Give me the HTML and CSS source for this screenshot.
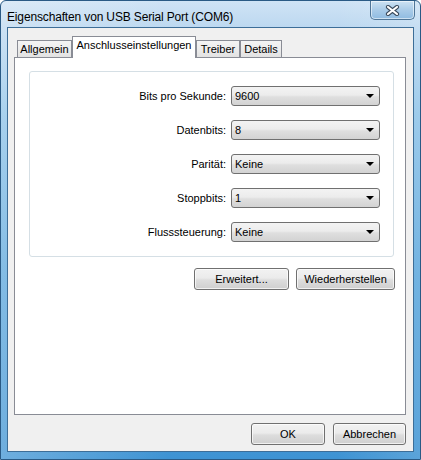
FILE: index.html
```html
<!DOCTYPE html>
<html>
<head>
<meta charset="utf-8">
<link rel="stylesheet" href="styles.css">
</head>
<body>
<div class="window">
  <div class="titlebar">
    <span class="title">Eigenschaften von USB Serial Port (COM6)</span>
    <div class="close">
      <svg width="15" height="11" viewBox="0 0 15 11">
        <path d="M3 2 L12 9 M12 2 L3 9" stroke="#3a4a5c" stroke-width="4.2" stroke-linecap="round" fill="none"/>
        <path d="M3 2 L12 9 M12 2 L3 9" stroke="#ffffff" stroke-width="2.2" stroke-linecap="round" fill="none"/>
      </svg>
    </div>
  </div>
  <div class="client">
    <div class="tabs">
      <div class="tab t1">Allgemein</div>
      <div class="tab active">Anschlusseinstellungen</div>
      <div class="tab t3">Treiber</div>
      <div class="tab t4">Details</div>
    </div>
    <div class="panel">
      <div class="group">
        <label class="lbl">Bits pro Sekunde:</label>
        <div class="combo"><span>9600</span><i class="arrow"></i></div>
        <label class="lbl">Datenbits:</label>
        <div class="combo"><span>8</span><i class="arrow"></i></div>
        <label class="lbl">Parität:</label>
        <div class="combo"><span>Keine</span><i class="arrow"></i></div>
        <label class="lbl">Stoppbits:</label>
        <div class="combo"><span>1</span><i class="arrow"></i></div>
        <label class="lbl">Flusssteuerung:</label>
        <div class="combo"><span>Keine</span><i class="arrow"></i></div>
      </div>
      <div class="actions">
        <button class="btn b-adv">Erweitert...</button>
        <button class="btn b-reset">Wiederherstellen</button>
      </div>
    </div>
    <div class="footer">
      <button class="btn b-ok">OK</button>
      <button class="btn b-cancel">Abbrechen</button>
    </div>
  </div>
</div>
</body>
</html>
```
FILE: styles.css
```css
html, body {
  margin: 0;
  padding: 0;
  background: #ffffff;
}
body {
  font-family: "Liberation Sans", Arial, sans-serif;
  font-size: 11px;
  color: #000;
}
.window {
  width: 421px;
  height: 460px;
  box-sizing: border-box;
  display: flex;
  flex-direction: column;
  border: 1px solid #2a5a85;
  border-radius: 6px 6px 0 0;
  background:
    linear-gradient(90deg, rgba(255,255,255,0.25) 0, rgba(255,255,255,0) 40%, rgba(255,255,255,0) 80%, rgba(255,255,255,0.15) 100%),
    linear-gradient(180deg, #cfe3f5 0%, #bcd8f0 6%, #8cc2e8 25%, #5aa6dc 60%, #3e93d3 100%);
}
.titlebar {
  height: 27px;
  display: flex;
  align-items: flex-start;
  padding-left: 6px;
}
.title {
  padding-top: 9px;
  line-height: 14px;
  font-size: 12px;
  letter-spacing: -0.15px;
  color: #000;
}
.close {
  margin-left: auto;
  margin-right: 5px;
  width: 45px;
  height: 19px;
  box-sizing: border-box;
  border: 1px solid #4f7597;
  border-top: 0;
  border-radius: 0 0 5px 5px;
  background: linear-gradient(180deg, #cde2f3 0%, #a9cbe8 50%, #8fbbe1 100%);
  box-shadow: inset 0 0 0 1px rgba(255,255,255,0.55);
  display: flex;
  align-items: center;
  justify-content: center;
}
.client {
  flex: 1;
  margin: 0 6px 7px 6px;
  border: 1px solid #3d6e98;
  background: #f0f0f0;
  padding: 8px 7px 6px 6px;
  display: flex;
  flex-direction: column;
}
.tabs {
  height: 21px;
  display: flex;
  align-items: flex-end;
  padding-left: 3px;
}
.tab {
  height: 17px;
  box-sizing: border-box;
  border: 1px solid #898c95;
  border-bottom: 0;
  background: linear-gradient(180deg, #f4f4f4 0%, #ececec 50%, #e2e2e2 100%);
  text-align: center;
  line-height: 16px;
  white-space: nowrap;
}
.t1 { width: 55px; }
.t3 { width: 44px; }
.t4 { width: 42px; }
.tab.active {
  width: 124px;
  height: 22px;
  margin-bottom: -1px;
  background: #ffffff;
  position: relative;
  z-index: 1;
  line-height: 17px;
}
.panel {
  height: 358px;
  box-sizing: border-box;
  border: 1px solid #898c95;
  background: #ffffff;
  padding: 13px 11px 0 14px;
}
.group {
  border: 1px solid #d5dfe5;
  border-radius: 3px;
  padding: 14px 13px 14px 0;
  display: grid;
  grid-template-columns: 1fr 149px;
  column-gap: 5px;
  row-gap: 14px;
  align-items: center;
}
.lbl {
  text-align: right;
  white-space: nowrap;
}
.combo {
  height: 20px;
  box-sizing: border-box;
  border: 1px solid #707070;
  border-radius: 3px;
  background: linear-gradient(180deg, #f3f3f3 0%, #ececec 45%, #dfdfdf 55%, #d3d3d3 100%);
  display: flex;
  align-items: center;
  padding-left: 3px;
  padding-right: 5px;
}
.combo span {
  flex: 1;
}
.arrow {
  width: 0;
  height: 0;
  border-left: 4px solid transparent;
  border-right: 4px solid transparent;
  border-top: 4px solid #000;
}
.actions {
  display: flex;
  justify-content: flex-end;
  gap: 7px;
  margin-top: 11px;
  margin-right: -1px;
}
.btn {
  height: 22px;
  box-sizing: border-box;
  border: 1px solid #707070;
  border-radius: 3px;
  background: linear-gradient(180deg, #f2f2f2 0%, #ebebeb 45%, #dddddd 55%, #cfcfcf 100%);
  box-shadow: inset 0 0 0 1px rgba(255,255,255,0.7);
  font-family: "Liberation Sans", Arial, sans-serif;
  font-size: 11px;
  color: #000;
  padding: 0;
}
.b-adv { width: 95px; }
.b-reset { width: 99px; }
.footer {
  display: flex;
  justify-content: flex-end;
  gap: 8px;
  margin-top: 8px;
}
.b-ok { width: 74px; }
.b-cancel { width: 73px; }
```
